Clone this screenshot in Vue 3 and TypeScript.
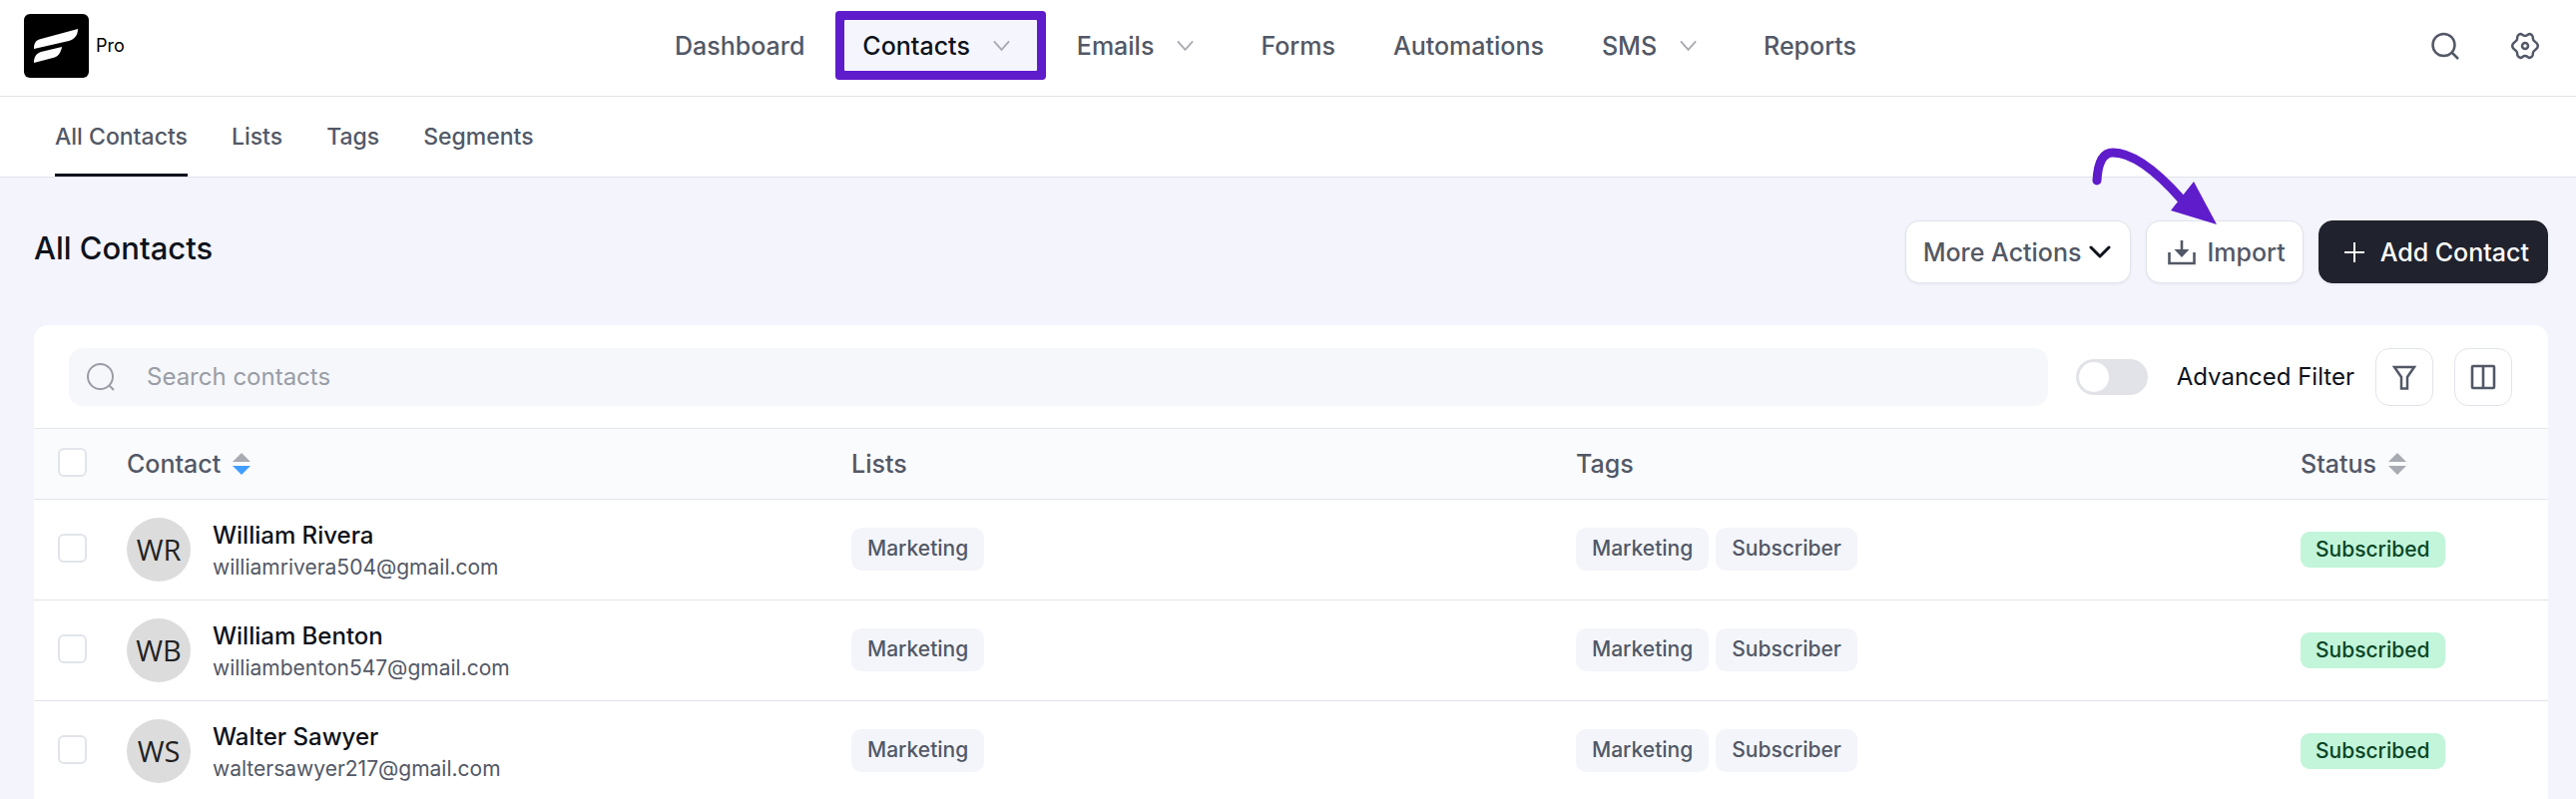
<script setup lang="ts">
import { ref } from 'vue'

interface NavItem {
  label: string
  menu?: boolean
  active?: boolean
}

interface Contact {
  initials: string
  name: string
  email: string
  lists: string[]
  tags: string[]
  status: string
}

const navItems: NavItem[] = [
  { label: 'Dashboard' },
  { label: 'Contacts', menu: true, active: true },
  { label: 'Emails', menu: true },
  { label: 'Forms' },
  { label: 'Automations' },
  { label: 'SMS', menu: true },
  { label: 'Reports' },
]

const tabs = ['All Contacts', 'Lists', 'Tags', 'Segments']
const activeTab = ref('All Contacts')
const search = ref('')
const advanced = ref(false)

const contacts: Contact[] = [
  { initials: 'WR', name: 'William Rivera', email: 'williamrivera504@gmail.com', lists: ['Marketing'], tags: ['Marketing', 'Subscriber'], status: 'Subscribed' },
  { initials: 'WB', name: 'William Benton', email: 'williambenton547@gmail.com', lists: ['Marketing'], tags: ['Marketing', 'Subscriber'], status: 'Subscribed' },
  { initials: 'WS', name: 'Walter Sawyer', email: 'waltersawyer217@gmail.com', lists: ['Marketing'], tags: ['Marketing', 'Subscriber'], status: 'Subscribed' },
]
</script>

<template>
  <div class="app">
    <header class="topbar">
      <a class="brand" href="#">
        <svg class="logo" viewBox="0 0 65 64" aria-hidden="true">
          <rect width="65" height="64" rx="6" fill="#000" />
          <path d="M10 35C10 29 12 26 17 25L54 15C54 21 51 25 45 27L10 35Z" fill="#fff" />
          <path d="M10 49C10 43 12 40 17 38L38 33C37 39 34 43 29 44L10 49Z" fill="#fff" />
        </svg>
        <span>Pro</span>
      </a>
      <nav class="main-nav" aria-label="Main">
        <a
          v-for="item in navItems"
          :key="item.label"
          href="#"
          class="nav-item"
          :class="{ active: item.active, menu: item.menu }"
        >
          {{ item.label }}
          <svg v-if="item.menu" class="caret" viewBox="0 0 18 12" aria-hidden="true">
            <path d="M1 1L9 10L17 1" fill="none" stroke="#a9abb2" stroke-width="2" />
          </svg>
        </a>
      </nav>
      <div class="tools">
        <button type="button" class="bare" aria-label="Search">
          <svg viewBox="0 0 28 28" width="28" height="28" fill="none" stroke="#525866" stroke-width="2.5">
            <circle cx="12.5" cy="13" r="11" />
            <path d="M20.5 20.5L27 27" />
          </svg>
        </button>
        <button type="button" class="bare" aria-label="Settings">
          <svg viewBox="0 0 28 28" width="28" height="28" fill="none" stroke="#525866" stroke-width="2.5" stroke-linejoin="round">
            <path d="M9.500 2C11 2 11.500 4 14 4C16.500 4 17 2 18.500 2C21.500 3 22 4 21.800 6.500C21.800 10.500 26.800 9.500 26.800 14C26.800 18.500 21.800 17.500 21.800 21.500C22 24 21.500 25 18.500 26C17 26 16.500 24 14 24C11.500 24 11 26 9.500 26C6.500 25 6 24 6.200 21.500C6.200 17.500 1.200 18.500 1.200 14C1.200 9.500 6.200 10.500 6.200 6.500C6 4 6.500 3 9.500 2Z" />
            <circle cx="14" cy="14" r="3" />
          </svg>
        </button>
      </div>
    </header>

    <nav class="tabs" aria-label="Contacts">
      <a
        v-for="tab in tabs"
        :key="tab"
        href="#"
        class="tab"
        :class="{ active: tab === activeTab }"
        @click.prevent="activeTab = tab"
      >{{ tab }}</a>
    </nav>

    <main class="content">
      <div class="page-head">
        <h1>All Contacts</h1>
        <div class="actions">
          <button type="button" class="btn">
            More Actions
            <svg viewBox="0 0 22 14" width="22" height="14" fill="none" stroke="#0e121b" stroke-width="3" stroke-linecap="round" stroke-linejoin="round">
              <path d="M2 2L11 11L20 2" />
            </svg>
          </button>
          <div class="import-wrap">
            <button type="button" class="btn import">
              <svg viewBox="0 0 28 26" width="28" height="26" fill="none" stroke="#525866" stroke-width="2.6">
                <path d="M1.500 13V24H26.500V13" />
                <path d="M14 1V12" />
                <path d="M6.500 10H21.500L14 18Z" fill="#525866" stroke="none" />
              </svg>
              Import
            </button>
            <svg class="pointer" viewBox="0 0 128 80" aria-hidden="true">
              <path d="M6 33C7 14 12 5 22 5C42 5 66 24 90 51" fill="none" stroke="#5f1ccb" stroke-width="9" stroke-linecap="round" />
              <path d="M103 34L80 63L126 77Z" fill="#5f1ccb" />
            </svg>
          </div>
          <button type="button" class="btn primary">
            <svg viewBox="0 0 20 20" width="20" height="20" stroke="#fff" stroke-width="2">
              <path d="M10 0V20M0 10H20" />
            </svg>
            Add Contact
          </button>
        </div>
      </div>

      <section class="card">
        <div class="toolbar">
          <label class="search">
            <svg viewBox="0 0 28 28" width="28" height="28" fill="none" stroke="#9a9da6" stroke-width="2">
              <circle cx="13.500" cy="13.500" r="12.500" />
              <path d="M22 22L27 27" />
            </svg>
            <input v-model="search" type="text" placeholder="Search contacts" aria-label="Search contacts" />
          </label>
          <label class="switch">
            <input v-model="advanced" type="checkbox" role="switch" />
            <span>Advanced Filter</span>
          </label>
          <button type="button" class="square" aria-label="Filter">
            <svg viewBox="0 0 24 26" width="24" height="26" fill="none" stroke="#525866" stroke-width="2.5">
              <path d="M2 3H22L15 13V24.500H9V13Z" />
            </svg>
          </button>
          <button type="button" class="square last" aria-label="Columns">
            <svg viewBox="0 0 26 26" width="26" height="26" fill="none" stroke="#525866" stroke-width="2.6">
              <rect x="2" y="2" width="22" height="22" rx="1" />
              <path d="M13 2V24" />
            </svg>
          </button>
        </div>

        <table>
          <colgroup>
            <col class="col-check" />
            <col />
            <col />
            <col />
            <col class="col-status" />
          </colgroup>
          <thead>
            <tr>
              <th class="check"><input type="checkbox" aria-label="Select all contacts" /></th>
              <th>
                <span class="sortable">
                  Contact
                  <svg viewBox="0 0 18 22" width="18" height="22"><path d="M9 0L18 9H0Z" fill="#a8abb2" /><path d="M0 13H18L9 22Z" fill="#409eff" /></svg>
                </span>
              </th>
              <th>Lists</th>
              <th>Tags</th>
              <th>
                <span class="sortable">
                  Status
                  <svg viewBox="0 0 18 22" width="18" height="22"><path d="M9 0L18 9H0Z" fill="#a8abb2" /><path d="M0 13H18L9 22Z" fill="#a8abb2" /></svg>
                </span>
              </th>
            </tr>
          </thead>
          <tbody>
            <tr v-for="c in contacts" :key="c.email">
              <td class="check"><input type="checkbox" :aria-label="`Select ${c.name}`" /></td>
              <td>
                <div class="person">
                  <span class="avatar">{{ c.initials }}</span>
                  <div class="who">
                    <a href="#" class="name">{{ c.name }}</a>
                    <span class="email">{{ c.email }}</span>
                  </div>
                </div>
              </td>
              <td>
                <div class="chips"><span v-for="l in c.lists" :key="l" class="chip">{{ l }}</span></div>
              </td>
              <td>
                <div class="chips"><span v-for="t in c.tags" :key="t" class="chip">{{ t }}</span></div>
              </td>
              <td><span class="status">{{ c.status }}</span></td>
            </tr>
          </tbody>
        </table>
      </section>
    </main>
  </div>
</template>

<style>
body {
  margin: 0;
  background: #f3f4fc;
}
</style>

<style scoped>
.app {
  height: 100vh;
  overflow: hidden;
  font-family: Inter, 'Liberation Sans', sans-serif;
  font-size: 24px;
  line-height: 32px;
  color: #0e121b;
  background: #f3f4fc;
}

.app *,
.app *::before {
  box-sizing: border-box;
}

a {
  color: inherit;
  text-decoration: none;
}

button,
input {
  font: inherit;
  color: inherit;
}

button {
  cursor: pointer;
}

svg {
  flex: none;
  display: block;
}

.topbar {
  display: grid;
  grid-template-columns: 1fr auto 1fr;
  align-items: center;
  height: 97px;
  padding: 0 37px 5px 24px;
  background: #fff;
  border-bottom: 1px solid #e1e4ea;
}

.brand {
  display: flex;
  align-items: center;
  gap: 7px;
  font-size: 18px;
  color: #000;
}

.logo {
  width: 65px;
  height: 64px;
}

.main-nav {
  display: flex;
  gap: 22px;
  margin-right: 32px;
}

.nav-item {
  display: flex;
  align-items: center;
  gap: 23px;
  height: 51px;
  padding: 0 18px;
  font-size: 25px;
  font-weight: 500;
  color: #525866;
}

.nav-item.menu {
  padding-right: 27px;
}

.nav-item.active {
  color: #0e121b;
  background: #f5f6fd;
  border-radius: 1px;
  box-shadow: 0 0 0 9px #5f1ccb;
}

.caret {
  width: 17px;
  height: 12px;
}

.tools {
  display: flex;
  justify-content: flex-end;
  gap: 52px;
}

.bare {
  padding: 0;
  border: 0;
  background: none;
}

.tabs {
  display: flex;
  gap: 44px;
  height: 81px;
  padding: 0 55px;
  background: #fff;
  border-bottom: 1px solid #e1e4ea;
}

.tab {
  display: flex;
  align-items: center;
  padding-top: 2px;
  border-bottom: 3px solid transparent;
  font-size: 23px;
  font-weight: 500;
  color: #525866;
}

.tab.active {
  border-bottom-color: #0e121b;
}

.content {
  padding: 43px 28px 0 34px;
}

.page-head {
  display: flex;
  justify-content: space-between;
  margin-bottom: 42px;
}

h1 {
  margin: 8px 0 0;
  font-size: 31px;
  line-height: 40px;
  font-weight: 500;
}

.actions {
  display: flex;
  gap: 15px;
}

.btn {
  display: flex;
  align-items: center;
  gap: 8px;
  height: 63px;
  padding: 0 19px 0 17px;
  border: 1px solid #e1e4ea;
  border-radius: 14px;
  background: #fff;
  box-shadow: 0 1px 3px rgba(14, 18, 27, 0.06);
  font-size: 25px;
  font-weight: 500;
  color: #525866;
}

.import {
  gap: 11px;
  padding: 0 17px 0 21px;
}

.primary {
  gap: 16px;
  padding: 0 18px 0 25px;
  border-color: #20222d;
  background: #20222d;
  color: #fff;
}

.import-wrap {
  position: relative;
}

.pointer {
  position: absolute;
  left: -55px;
  top: -73px;
  width: 128px;
  height: 80px;
  pointer-events: none;
}

.card {
  overflow: hidden;
  border-radius: 14px 14px 0 0;
  background: #fff;
}

.toolbar {
  display: flex;
  align-items: center;
  height: 103px;
  padding: 0 36px 0 35px;
}

.search {
  display: flex;
  flex: 1;
  align-items: center;
  gap: 32px;
  height: 58px;
  padding: 0 18px;
  border-radius: 14px;
  background: #f5f7fa;
}

.search input {
  flex: 1;
  min-width: 0;
  padding: 0;
  border: 0;
  outline: 0;
  background: none;
}

.search input::placeholder {
  color: #9a9da6;
  opacity: 1;
}

.switch {
  display: flex;
  align-items: center;
  gap: 29px;
  margin: 0 21px 0 28px;
}

.switch input {
  appearance: none;
  width: 72px;
  height: 36px;
  margin: 0;
  padding: 3px;
  border-radius: 18px;
  background: #e1e3e8;
}

.switch input::before {
  content: '';
  display: block;
  width: 30px;
  height: 30px;
  border-radius: 50%;
  background: #fff;
}

.switch input:checked {
  background: #335cff;
}

.switch input:checked::before {
  margin-left: auto;
}

.square {
  display: grid;
  place-items: center;
  width: 58px;
  height: 58px;
  padding: 0;
  border: 1px solid #e1e4ea;
  border-radius: 14px;
  background: #fff;
}

.last {
  margin-left: 21px;
}

table {
  width: 100%;
  table-layout: fixed;
  border-collapse: separate;
  border-spacing: 0;
}

.col-check {
  width: 78px;
}

.col-status {
  width: 263px;
}

th {
  height: 72px;
  padding: 0 15px;
  border-top: 1px solid #e4e6ea;
  border-bottom: 1px solid #e1e4ea;
  background: #fafbfd;
  font-size: 25px;
  font-weight: 500;
  text-align: left;
  color: #525866;
}

td {
  height: 101px;
  padding: 0 15px 1px;
  border-bottom: 1px solid #e1e4ea;
}

.check {
  padding: 0 0 3px 24px;
}

.check input {
  appearance: none;
  display: block;
  width: 29px;
  height: 29px;
  margin: 0;
  border: 2px solid #e1e4ea;
  border-radius: 6px;
  background: #fff;
}

.check input:checked {
  border-color: #335cff;
  background: #335cff;
}

.sortable {
  display: flex;
  align-items: center;
  gap: 12px;
}

.person {
  display: flex;
  align-items: center;
  gap: 22px;
}

.avatar {
  display: grid;
  place-items: center;
  width: 64px;
  height: 64px;
  border-radius: 50%;
  background: #dcdcdc;
  font-family: 'Open Sans', 'Noto Sans', sans-serif;
  font-size: 29px;
  color: #222;
}

.who {
  display: flex;
  flex-direction: column;
  padding-top: 4px;
}

.name {
  font-weight: 500;
}

.email {
  font-size: 21px;
  color: #525866;
}

.chips {
  display: flex;
  gap: 7px;
}

.chip {
  padding: 5px 16px 6px;
  border-radius: 10px;
  background: #f3f5fa;
  font-size: 21px;
  font-weight: 500;
  color: #525866;
}

.status {
  display: inline-block;
  padding: 2px 15px;
  border-radius: 9px;
  background: #c2f5da;
  font-size: 21px;
  font-weight: 500;
  color: #0b4627;
}
</style>
